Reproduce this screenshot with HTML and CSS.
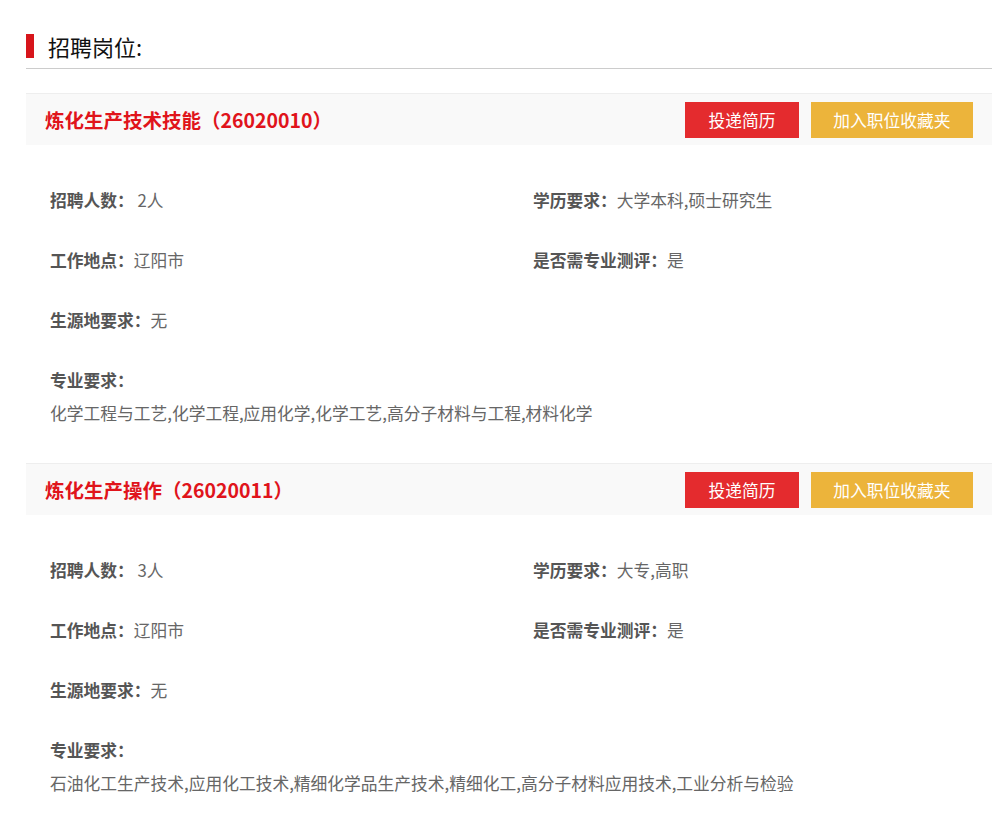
FILE: index.html
```html
<!DOCTYPE html>
<html lang="zh-CN">
<head>
    <meta charset="UTF-8">
    <title>招聘岗位</title>
    <link rel="stylesheet" href="styles.css">
</head>
<body>

<div class="wrap">
    <div class="section-title">
        <span class="title-mark"></span>
        <h2>招聘岗位:</h2>
    </div>

    <div class="job">
        <div class="job-head">
            <h3>炼化生产技术技能（26020010）</h3>
            <div class="job-actions">
                <button class="btn btn-send">投递简历</button>
                <button class="btn btn-fav">加入职位收藏夹</button>
            </div>
        </div>
        <div class="job-body">
            <p class="item"><b>招聘人数：</b> 2人</p>
            <p class="item"><b>学历要求：</b>大学本科,硕士研究生</p>
            <p class="item"><b>工作地点：</b>辽阳市</p>
            <p class="item"><b>是否需专业测评：</b>是</p>
            <p class="item"><b>生源地要求：</b>无</p>
            <p class="item"></p>
            <div class="item-wide">
                <b>专业要求：</b>
                <p>化学工程与工艺,化学工程,应用化学,化学工艺,高分子材料与工程,材料化学</p>
            </div>
        </div>
    </div>

    <div class="job">
        <div class="job-head">
            <h3>炼化生产操作（26020011）</h3>
            <div class="job-actions">
                <button class="btn btn-send">投递简历</button>
                <button class="btn btn-fav">加入职位收藏夹</button>
            </div>
        </div>
        <div class="job-body">
            <p class="item"><b>招聘人数：</b> 3人</p>
            <p class="item"><b>学历要求：</b>大专,高职</p>
            <p class="item"><b>工作地点：</b>辽阳市</p>
            <p class="item"><b>是否需专业测评：</b>是</p>
            <p class="item"><b>生源地要求：</b>无</p>
            <p class="item"></p>
            <div class="item-wide">
                <b>专业要求：</b>
                <p>石油化工生产技术,应用化工技术,精细化学品生产技术,精细化工,高分子材料应用技术,工业分析与检验</p>
            </div>
        </div>
    </div>
</div>

</body>
</html>
```

FILE: styles.css
```css
* {
    box-sizing: border-box;
}

body {
    margin: 0;
    background: #fff;
    font-family: "Noto Sans CJK SC", "Noto Sans", sans-serif;
    color: #666;
}

.wrap {
    width: 966px;
    margin-left: 26px;
    padding-top: 34px;
}

/* Section heading with the red mark */
.section-title {
    display: flex;
    align-items: center;
    gap: 14px;
    height: 24px;
}

.title-mark {
    width: 8px;
    height: 24px;
    background: #d7151b;
}

.section-title h2 {
    margin: 0;
    font-size: 22px;
    font-weight: normal;
    color: #111;
    line-height: 24px;
}

.section-title + .job {
    border-top: 1px solid #ccc;
    margin-top: 10px;
    padding-top: 24px;
}

/* Job block */
.job-head {
    display: flex;
    align-items: center;
    justify-content: space-between;
    height: 52px;
    padding: 0 19px;
    background: #f9f9f9;
    border-top: 1px solid #eee;
}

.job-head h3 {
    margin: 0;
    font-size: 19.5px;
    font-weight: bold;
    color: #e0141b;
}

.job-actions {
    display: flex;
    gap: 12px;
}

.btn {
    height: 36px;
    padding: 0;
    border: none;
    color: #fff;
    font-family: inherit;
    font-size: 16.75px;
    cursor: pointer;
}

.btn-send {
    width: 114px;
    background: #e42b2e;
}

.btn-fav {
    width: 162px;
    background: #ecb43b;
}

.job-body {
    display: grid;
    grid-template-columns: 1fr 1fr;
    padding: 25px 0 32px;
}

.item {
    margin: 0;
    padding-left: 24px;
    line-height: 60px;
    font-size: 16.75px;
    color: #666;
}

.item b,
.item-wide b {
    color: #555;
}

.item-wide {
    grid-column: 1 / 3;
    padding-left: 24px;
    padding-top: 15px;
    font-size: 16.75px;
    line-height: 30px;
}

.item-wide p {
    margin: 0;
    line-height: 36px;
    color: #666;
}
```
